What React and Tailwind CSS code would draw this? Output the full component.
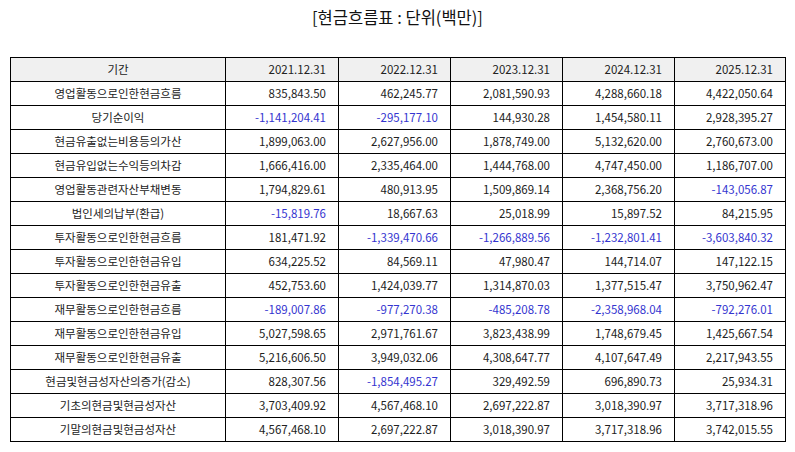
const COLS = ["2021.12.31", "2022.12.31", "2023.12.31", "2024.12.31", "2025.12.31"]

const ROWS = [
  ["영업활동으로인한현금흐름", "835,843.50", "462,245.77", "2,081,590.93", "4,288,660.18", "4,422,050.64"],
  ["당기순이익", "-1,141,204.41", "-295,177.10", "144,930.28", "1,454,580.11", "2,928,395.27"],
  ["현금유출없는비용등의가산", "1,899,063.00", "2,627,956.00", "1,878,749.00", "5,132,620.00", "2,760,673.00"],
  ["현금유입없는수익등의차감", "1,666,416.00", "2,335,464.00", "1,444,768.00", "4,747,450.00", "1,186,707.00"],
  ["영업활동관련자산부채변동", "1,794,829.61", "480,913.95", "1,509,869.14", "2,368,756.20", "-143,056.87"],
  ["법인세의납부(환급)", "-15,819.76", "18,667.63", "25,018.99", "15,897.52", "84,215.95"],
  ["투자활동으로인한현금흐름", "181,471.92", "-1,339,470.66", "-1,266,889.56", "-1,232,801.41", "-3,603,840.32"],
  ["투자활동으로인한현금유입", "634,225.52", "84,569.11", "47,980.47", "144,714.07", "147,122.15"],
  ["투자활동으로인한현금유출", "452,753.60", "1,424,039.77", "1,314,870.03", "1,377,515.47", "3,750,962.47"],
  ["재무활동으로인한현금흐름", "-189,007.86", "-977,270.38", "-485,208.78", "-2,358,968.04", "-792,276.01"],
  ["재무활동으로인한현금유입", "5,027,598.65", "2,971,761.67", "3,823,438.99", "1,748,679.45", "1,425,667.54"],
  ["재무활동으로인한현금유출", "5,216,606.50", "3,949,032.06", "4,308,647.77", "4,107,647.49", "2,217,943.55"],
  ["현금및현금성자산의증가(감소)", "828,307.56", "-1,854,495.27", "329,492.59", "696,890.73", "25,934.31"],
  ["기초의현금및현금성자산", "3,703,409.92", "4,567,468.10", "2,697,222.87", "3,018,390.97", "3,717,318.96"],
  ["기말의현금및현금성자산", "4,567,468.10", "2,697,222.87", "3,018,390.97", "3,717,318.96", "3,742,015.55"],
]

const font = { fontFamily: '"Noto Sans CJK KR", "Noto Sans", sans-serif' }

export default function App() {
  return (
    <div className="w-[795px] h-[452px] bg-white text-[#222]" style={font}>
      <h1 className="pt-[5px] h-[57px] text-center text-[16.5px] leading-[24px] text-[#111]">[현금흐름표 : 단위(백만)]</h1>
      <div className="px-[10px]">
        <table className="w-[775px] table-fixed border-collapse text-[11.5px] leading-[23px]">
          <colgroup>
            <col className="w-[215px]" />
            <col className="w-[113px]" />
            <col className="w-[112px]" />
            <col className="w-[112px]" />
            <col className="w-[112px]" />
            <col className="w-[111px]" />
          </colgroup>
          <thead>
            <tr className="bg-[#f0f0f0]">
              <th className="border border-black font-normal text-center h-[24px] p-0">기간</th>
              {COLS.map(c => (
                <th key={c} className="border border-black font-normal text-right p-0 pr-[12px] h-[24px]">{c}</th>
              ))}
            </tr>
          </thead>
          <tbody>
            {ROWS.map(([label, ...vals]) => (
              <tr key={label}>
                <td className="border border-black text-center h-[24px] p-0">{label}</td>
                {vals.map((v, i) => (
                  <td
                    key={i}
                    className={`border border-black text-right p-0 pr-[12px] h-[24px] ${v.startsWith("-") ? "text-[#3535d0]" : ""}`}
                  >
                    {v}
                  </td>
                ))}
              </tr>
            ))}
          </tbody>
        </table>
      </div>
    </div>
  )
}
